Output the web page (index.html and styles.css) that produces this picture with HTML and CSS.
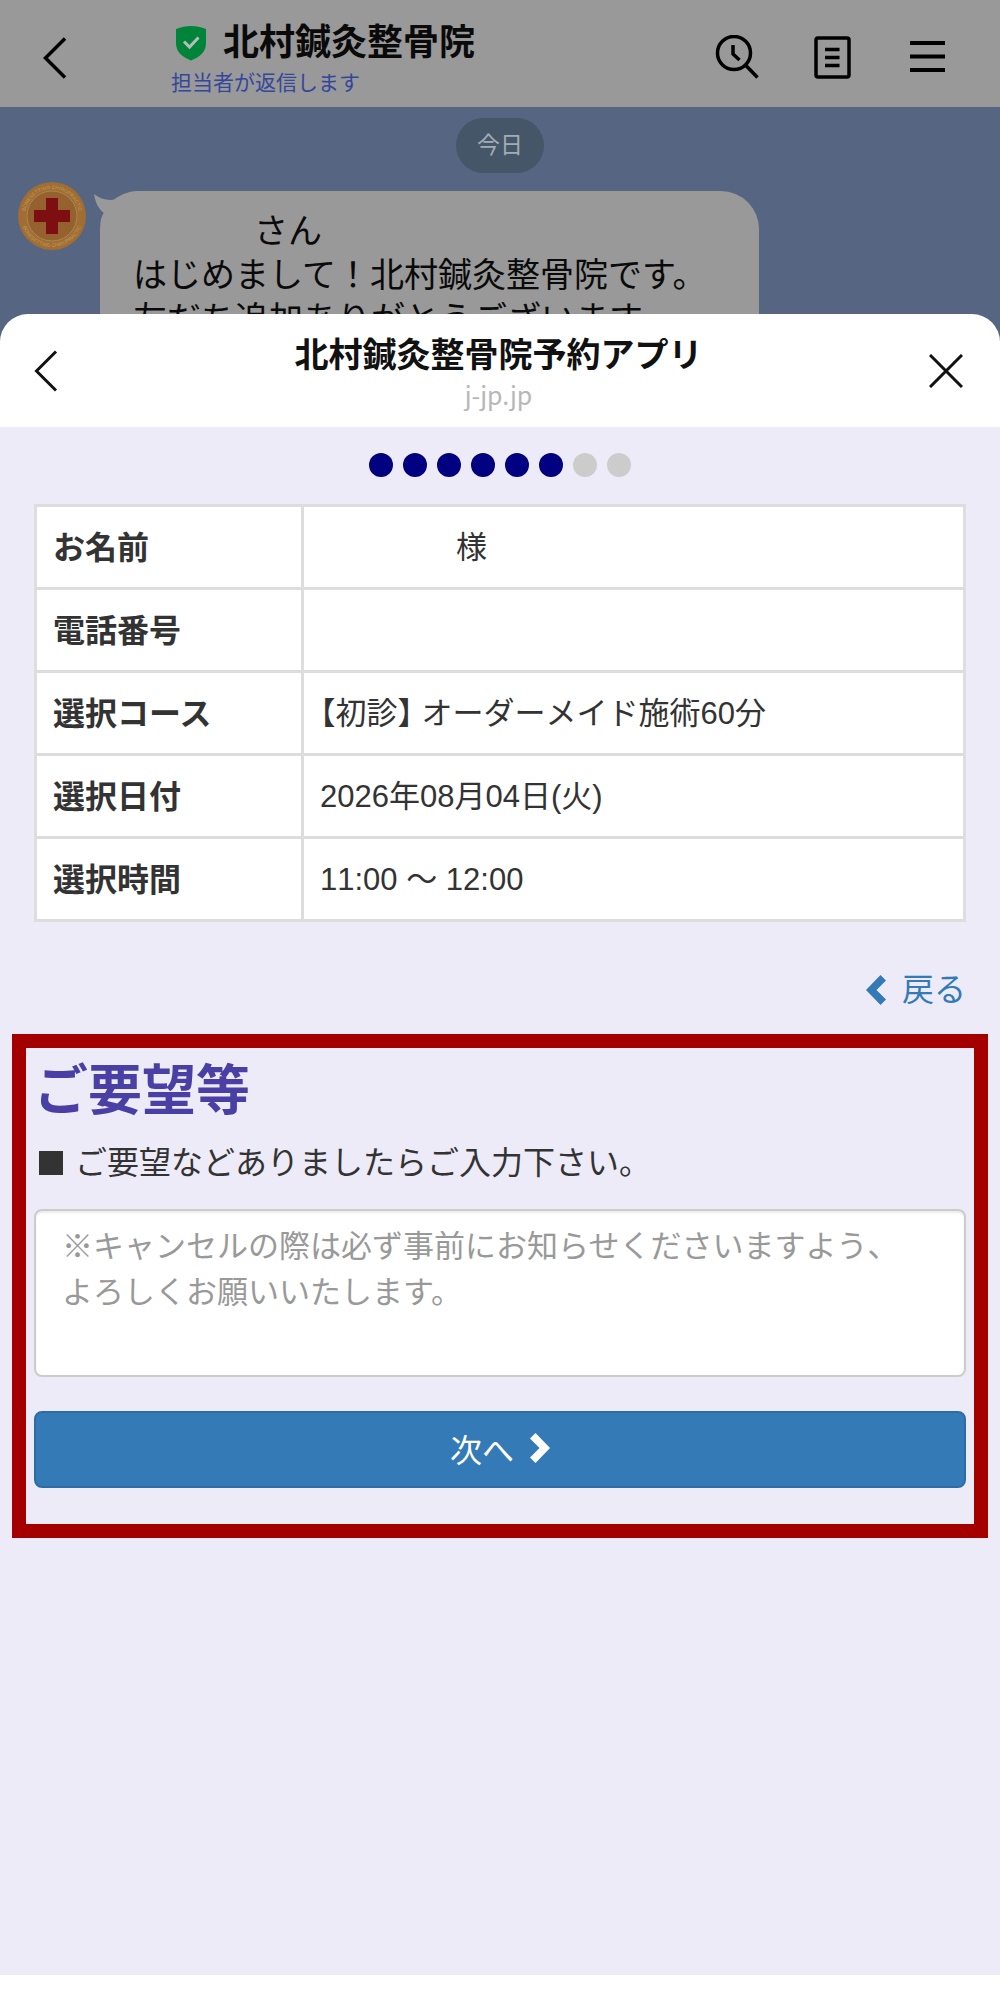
FILE: index.html
```html
<!DOCTYPE html>
<html lang="ja">
<head>
  <meta charset="UTF-8">
  <meta name="viewport" content="width=device-width, initial-scale=1">
  <title>北村鍼灸整骨院予約アプリ</title>
  <link rel="stylesheet" href="styles.css">
</head>
<body>
  <!-- トーク画面 -->
  <div class="talk">
    <header class="talk-header">
      <button class="icon-btn" type="button" aria-label="戻る">
        <svg width="24" height="42" viewBox="0 0 24 42"><path d="M22 1.5 2.5 21 22 40.5" fill="none" stroke="#000" stroke-width="3.5"/></svg>
      </button>
      <div class="talk-name">
        <h1>
          <svg width="32" height="35" viewBox="0 0 32 35"><path d="M16 0C21 0 26 1 31 3V17C31 26 25 31 16 34.5 7 31 1 26 1 17V3C6 1 11 0 16 0Z" fill="#00843a"/><path d="m9 15.5 5.500 5.500 9-9.500" fill="none" stroke="#b5bdb7" stroke-width="3"/></svg>
          北村鍼灸整骨院
        </h1>
        <p>担当者が返信します</p>
      </div>
      <div class="talk-tools">
        <button class="icon-btn" type="button" aria-label="検索">
          <svg width="44" height="46" viewBox="0 0 44 46"><g fill="none" stroke="#000" stroke-width="3.5"><circle cx="19" cy="18" r="16.500"/><path d="m30.500 30 12 12.500M18 10v9l6.500 6"/></g></svg>
        </button>
        <button class="icon-btn" type="button" aria-label="ノート">
          <svg width="44" height="46" viewBox="0 0 44 46"><g fill="none" stroke="#000" stroke-width="3.5"><rect x="6" y="3" width="33" height="39" rx="2"/><path d="M15 14.500H29.500M15 22.500H29.500M15 30.500H29.500"/></g></svg>
        </button>
        <button class="icon-btn" type="button" aria-label="メニュー">
          <svg width="44" height="46" viewBox="0 0 44 46"><path d="M5 8h35M5 21.500h35M5 35h35" stroke="#000" stroke-width="4"/></svg>
        </button>
      </div>
    </header>

    <div class="talk-date">今日</div>

    <div class="talk-row">
      <svg class="avatar" width="70" height="70" viewBox="0 0 70 70">
        <defs>
          <path id="arcTop" d="M8 35a27 27 0 0 1 54 0"/>
          <path id="arcBottom" d="M4 35a31 31 0 0 0 62 0"/>
        </defs>
        <circle cx="35" cy="35" r="34" fill="#a06d33"/>
        <circle cx="35" cy="35" r="25" fill="#94612f" stroke="#ad8550"/>
        <g class="avatar-text">
          <text><textPath href="#arcTop" startOffset="50%">BONESETTING CHIROPRACTIC</textPath></text>
          <text><textPath href="#arcBottom" startOffset="50%">BONESETTING CHIROPRACTIC</textPath></text>
        </g>
        <path d="M29 17h12v12h12v12H41v12H29V41H17V29h12Z" fill="#7d0f13"/>
      </svg>
      <div class="bubble">
        <svg class="bubble-tail" width="48" height="34" viewBox="0 0 48 34"><path d="M0 3C6 8 14 10 21 8.500 28 4 35 0 48 0V34H7C6 30 7 26 10 22 4 18 1 10 0 3Z" fill="#999"/></svg>
        <p class="bubble-name">さん</p>
        <p>はじめまして！北村鍼灸整骨院です。</p>
        <p>友だち追加ありがとうございます。</p>
      </div>
    </div>
  </div>

  <!-- 予約アプリ -->
  <main class="sheet">
    <header class="sheet-header">
      <button class="icon-btn" type="button" aria-label="戻る">
        <svg width="34" height="42" viewBox="0 0 34 42"><path d="M22 1.5 2.5 21 22 40.5" fill="none" stroke="#111" stroke-width="3"/></svg>
      </button>
      <div class="sheet-title">
        <h2>北村鍼灸整骨院予約アプリ</h2>
        <p>j-jp.jp</p>
      </div>
      <button class="icon-btn" type="button" aria-label="閉じる">
        <svg width="34" height="34" viewBox="0 0 34 34"><path d="m1 1 32 32M33 1 1 33" stroke="#111" stroke-width="3"/></svg>
      </button>
    </header>

    <div class="sheet-body">
      <ol class="steps" aria-label="進行状況">
        <li class="on"></li>
        <li class="on"></li>
        <li class="on"></li>
        <li class="on"></li>
        <li class="on"></li>
        <li class="on"></li>
        <li></li>
        <li></li>
      </ol>

      <table class="summary">
        <tr><th scope="row">お名前</th><td><span class="name">様</span></td></tr>
        <tr><th scope="row">電話番号</th><td></td></tr>
        <tr><th scope="row">選択コース</th><td>【初診】 オーダーメイド施術60分</td></tr>
        <tr><th scope="row">選択日付</th><td>2026年08月04日(火)</td></tr>
        <tr><th scope="row">選択時間</th><td>11:00 ～ 12:00</td></tr>
      </table>

      <a class="back" href="#">
        <svg width="20" height="30" viewBox="0 0 20 30"><path d="M14.5 0 20 5.500 10.500 15 20 24.500 14.500 30 0 15Z" fill="currentColor"/></svg>
        戻る
      </a>

      <form class="request">
        <h3>ご要望等</h3>
        <label for="memo"><span class="square"></span>ご要望などありましたらご入力下さい。</label>
        <textarea id="memo" rows="3" placeholder="※キャンセルの際は必ず事前にお知らせくださいますよう、&#10;よろしくお願いいたします。"></textarea>
        <button class="next" type="button">
          次へ
          <svg width="20" height="30" viewBox="0 0 20 30"><path d="M5.5 0 0 5.500 9.500 15 0 24.500 5.500 30 20 15Z" fill="currentColor"/></svg>
        </button>
      </form>
    </div>
  </main>
</body>
</html>
```
FILE: styles.css
```css
* {
  box-sizing: border-box;
}

body {
  display: flex;
  flex-direction: column;
  min-height: 100vh;
  margin: 0;
  padding-bottom: 25px;
  background: #fff;
  color: #333;
  font-family: "Liberation Sans", "Noto Sans CJK JP", sans-serif;
  font-size: 32px;
}

h1, h2, h3, p, ol {
  margin: 0;
  padding: 0;
}

svg {
  display: block;
  flex: none;
}

.icon-btn {
  padding: 0;
  border: none;
  background: none;
  cursor: pointer;
}

/* トーク画面 */
.talk {
  height: 354px;
  overflow: hidden;
  background: #566581;
  color: #0a0a0a;
}

.talk-header {
  display: flex;
  align-items: center;
  height: 107px;
  padding: 8px 51px 0 43px;
  background: #999;
}

.talk-name {
  margin-left: 104px;
  padding-top: 7px;
}

.talk-name h1 {
  display: flex;
  align-items: center;
  gap: 16px;
  padding-left: 4px;
  font-size: 36px;
  line-height: 44px;
}

.talk-name p {
  color: #34479b;
  font-size: 21px;
  line-height: 36px;
}

.talk-tools {
  display: flex;
  gap: 51px;
  margin-left: auto;
}

.talk-date {
  width: 88px;
  margin: 11px auto 18px;
  border-radius: 28px;
  background: #455669;
  color: #a3acb5;
  font-size: 23px;
  line-height: 55px;
  text-align: center;
}

.talk-row {
  display: flex;
  align-items: flex-start;
  gap: 13px;
  padding-left: 17px;
}

.avatar {
  margin-top: -10px;
}

.avatar-text {
  fill: #c39a5c;
  font-size: 5px;
  text-anchor: middle;
}

.bubble {
  position: relative;
  width: 659px;
  padding: 18px 33px;
  border-radius: 38px;
  background: #999;
  font-size: 34px;
  line-height: 44px;
  white-space: nowrap;
}

.bubble-tail {
  position: absolute;
  top: 0;
  left: -6px;
}

.bubble-name {
  padding-left: 121px;
}

/* 予約アプリ */
.sheet {
  position: relative;
  display: flex;
  flex: 1;
  flex-direction: column;
  margin-top: -40px;
}

.sheet-header {
  display: flex;
  align-items: center;
  justify-content: space-between;
  height: 113px;
  padding: 0 37px 0 34px;
  border-radius: 28px 28px 0 0;
  background: #fff;
}

.sheet-title {
  padding-top: 2px;
  color: #111;
  text-align: center;
}

.sheet-title h2 {
  font-size: 34px;
  line-height: 44px;
}

.sheet-title p {
  color: #b7b7b7;
  font-family: "Noto Sans CJK JP", sans-serif;
  font-size: 25px;
  line-height: 34px;
}

.sheet-body {
  flex: 1;
  padding: 26px 12px;
  background: #edebf7;
}

.steps {
  display: flex;
  justify-content: center;
  gap: 10px;
  list-style: none;
}

.steps li {
  width: 24px;
  height: 24px;
  border-radius: 50%;
  background: #ccc;
}

.steps .on {
  background: #000080;
}

.summary {
  width: calc(100% - 44px);
  margin: 27px 22px 0;
  border-collapse: collapse;
  table-layout: fixed;
  background: #fff;
}

.summary th,
.summary td {
  height: 83px;
  padding: 2px 16px 0;
  border: 3px solid #ddd;
  line-height: 44px;
  text-align: left;
}

.summary th {
  width: 267px;
}

.summary td {
  font-size: 31px;
  font-feature-settings: "halt";
  font-kerning: none;
}

.name {
  padding-left: 136px;
}

.back {
  display: flex;
  align-items: center;
  justify-content: flex-end;
  gap: 16px;
  margin: 46px 22px 22px;
  color: #337ab7;
  line-height: 44px;
  text-decoration: none;
}

.request {
  padding: 10px 8px 36px;
  border: 14px solid #a50000;
}

.request h3 {
  color: #4a3fa5;
  font-size: 54px;
  line-height: 66px;
}

.request label {
  display: flex;
  align-items: center;
  gap: 12px;
  padding: 17px 5px 24px;
  line-height: 44px;
}

.square {
  width: 24px;
  height: 24px;
  background: #333;
}

.request textarea {
  display: block;
  width: 100%;
  padding: 13px 26px;
  border: 2px solid #ccc;
  border-radius: 8px;
  box-shadow: inset 0 2px 2px rgba(0, 0, 0, 0.08);
  color: #555;
  font: inherit;
  font-size: 31px;
  line-height: 46px;
  resize: none;
}

.request textarea::placeholder {
  color: #999;
}

.next {
  display: flex;
  align-items: center;
  justify-content: center;
  gap: 16px;
  width: 100%;
  height: 77px;
  margin-top: 34px;
  padding: 0 0 4px;
  border: 2px solid #2e6da4;
  border-radius: 8px;
  background: #337ab7;
  color: #fff;
  font: inherit;
  cursor: pointer;
}
```
